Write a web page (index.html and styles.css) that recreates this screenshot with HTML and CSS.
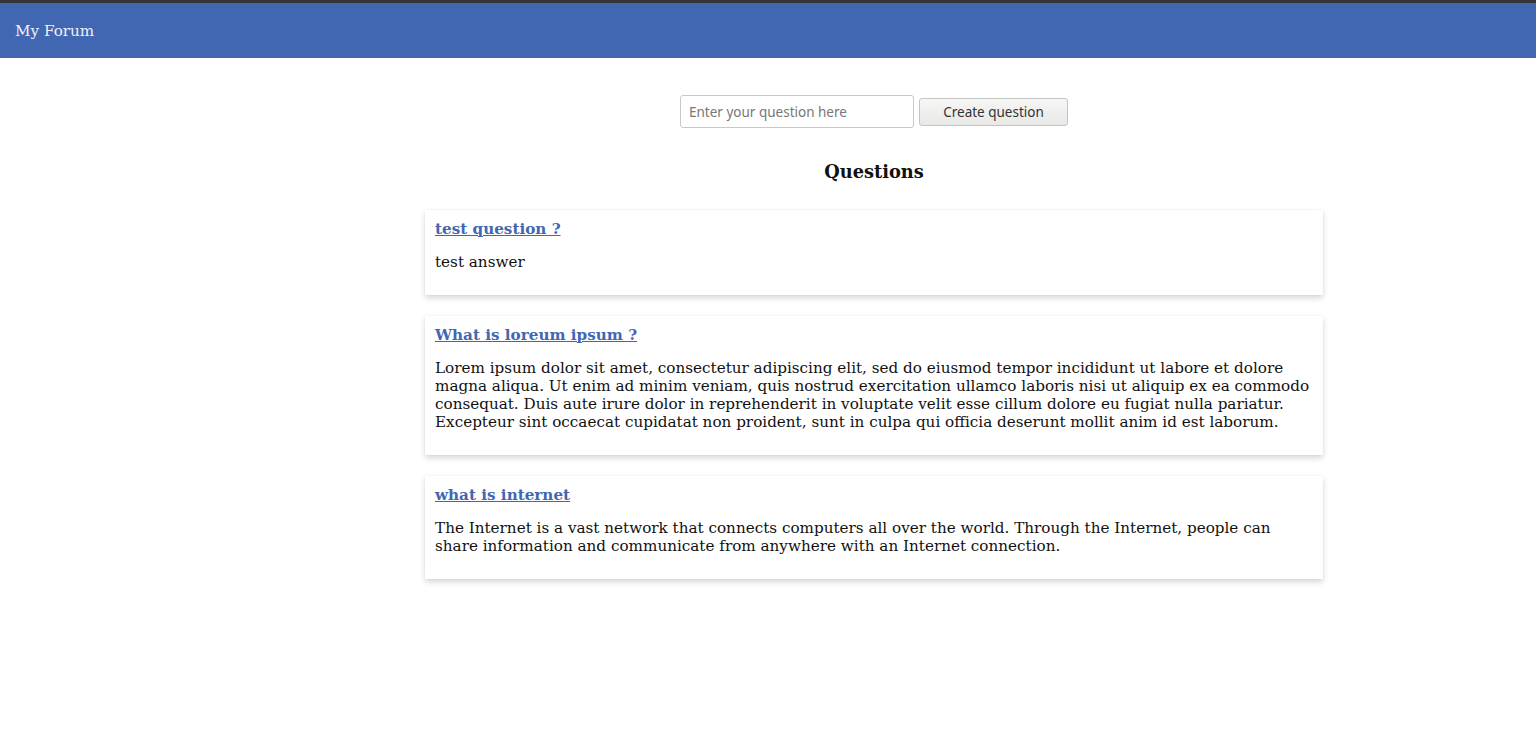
FILE: index.html
```html
<!DOCTYPE html>
<html>
<head>
<meta charset="utf-8">
<title>My Forum</title>
<link rel="stylesheet" href="styles.css">
</head>
<body>
<header class="navbar">
  <span class="brand">My Forum</span>
</header>
<main class="main">
  <div class="content">
    <form class="ask-form">
      <input class="ask-input" type="text" placeholder="Enter your question here">
      <button class="ask-button" type="button">Create question</button>
    </form>
    <h3 class="section-title">Questions</h3>
    <div class="question-list">
      <article class="card">
        <a class="card-title" href="#">test question ?</a>
        <p class="card-body">test answer</p>
      </article>
      <article class="card">
        <a class="card-title" href="#">What is loreum ipsum ?</a>
        <p class="card-body">Lorem ipsum dolor sit amet, consectetur adipiscing elit, sed do eiusmod tempor incididunt ut labore et dolore magna aliqua. Ut enim ad minim veniam, quis nostrud exercitation ullamco laboris nisi ut aliquip ex ea commodo consequat. Duis aute irure dolor in reprehenderit in voluptate velit esse cillum dolore eu fugiat nulla pariatur. Excepteur sint occaecat cupidatat non proident, sunt in culpa qui officia deserunt mollit anim id est laborum.</p>
      </article>
      <article class="card">
        <a class="card-title" href="#">what is internet</a>
        <p class="card-body">The Internet is a vast network that connects computers all over the world. Through the Internet, people can share information and communicate from anywhere with an Internet connection.</p>
      </article>
    </div>
  </div>
</main>
</body>
</html>
```
FILE: styles.css
```css
html, body {
  margin: 0;
  padding: 0;
  background: #ffffff;
}
body {
  font-family: "DejaVu Serif", serif;
  font-size: 15.2px;
  color: #111;
}
.navbar {
  height: 55px;
  border-top: 3px solid #333538;
  background: #4267b2;
  display: flex;
  align-items: center;
  padding-left: 15px;
}
.brand {
  color: #eef0f8;
  font-size: 15.2px;
}
.main {
  padding-left: 212px;
  padding-bottom: 40px;
}
.content {
  display: flex;
  flex-direction: column;
  align-items: center;
}
.ask-form {
  margin-top: 37px;
  display: flex;
  align-items: center;
  gap: 5px;
}
.ask-input {
  box-sizing: border-box;
  width: 234px;
  height: 33px;
  border: 1px solid #c9c9c9;
  border-radius: 3px;
  padding: 0 8px;
  font-family: "Noto Sans", "DejaVu Sans", sans-serif;
  font-size: 13.5px;
  color: #333;
  outline: none;
}
.ask-input::placeholder {
  color: #777;
}
.ask-button {
  box-sizing: border-box;
  width: 149px;
  height: 28px;
  border: 1px solid #c4c4c4;
  border-radius: 3px;
  background: linear-gradient(#f6f6f5, #e8e8e7);
  font-family: "Noto Sans", "DejaVu Sans", sans-serif;
  font-size: 13.5px;
  color: #333;
  padding: 0;
}
.section-title {
  margin: 33px 0 27px;
  font-size: 17.8px;
  font-weight: bold;
  line-height: 22px;
}
.question-list {
  width: 898px;
  display: flex;
  flex-direction: column;
  gap: 21px;
}
.card {
  background: #fff;
  padding: 10px 10px 8px;
  box-shadow: 0 3px 6px rgba(0, 0, 0, 0.16), 0 0 2px rgba(0, 0, 0, 0.05);
}
.card-title {
  display: block;
  color: #4267b2;
  font-weight: bold;
  text-decoration: underline;
  line-height: 19px;
}
.card-body {
  margin: 14px 0 16px;
  line-height: 18px;
}
```
